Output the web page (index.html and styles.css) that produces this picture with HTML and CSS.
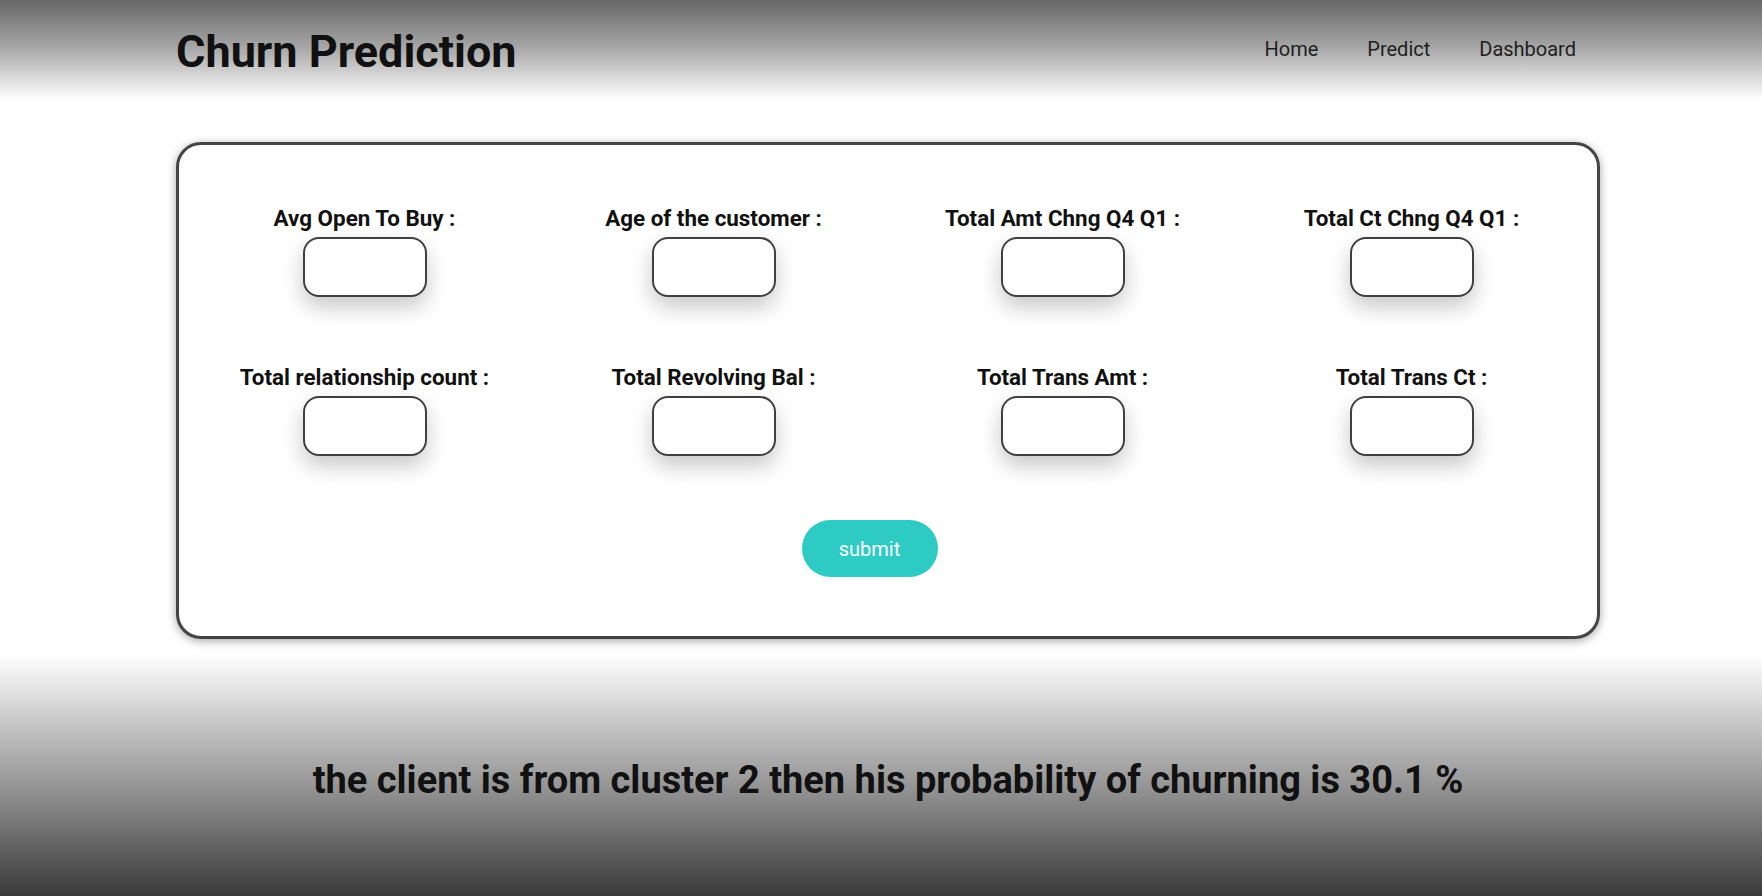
FILE: index.html
```html
<!DOCTYPE html>
<html lang="en">
<head>
<meta charset="utf-8">
<title>Churn Prediction</title>
<link rel="stylesheet" href="styles.css">
</head>
<body>
<header class="site-header">
  <div class="header-inner">
    <h1 class="brand">Churn Prediction</h1>
    <nav class="nav">
      <a class="nav-link" href="#">Home</a>
      <a class="nav-link" href="#">Predict</a>
      <a class="nav-link" href="#">Dashboard</a>
    </nav>
  </div>
</header>

<main class="main">
  <form class="card">
    <div class="grid">
      <div class="field"><label class="field-label">Avg Open To Buy :</label><input class="field-input" type="text"></div>
      <div class="field"><label class="field-label">Age of the customer :</label><input class="field-input" type="text"></div>
      <div class="field"><label class="field-label">Total Amt Chng Q4 Q1 :</label><input class="field-input" type="text"></div>
      <div class="field"><label class="field-label">Total Ct Chng Q4 Q1 :</label><input class="field-input" type="text"></div>
      <div class="field"><label class="field-label">Total relationship count :</label><input class="field-input" type="text"></div>
      <div class="field"><label class="field-label">Total Revolving Bal :</label><input class="field-input" type="text"></div>
      <div class="field"><label class="field-label">Total Trans Amt :</label><input class="field-input" type="text"></div>
      <div class="field"><label class="field-label">Total Trans Ct :</label><input class="field-input" type="text"></div>
    </div>
    <div class="actions">
      <button class="submit" type="button">submit</button>
    </div>
  </form>
</main>

<footer class="result">
  <p class="result-text">the client is from cluster 2 then his probability of churning is 30.1 %</p>
</footer>
</body>
</html>
```

FILE: styles.css
```css
* { box-sizing: border-box; }

html, body {
  margin: 0;
  padding: 0;
}

body {
  font-family: Roboto, "Liberation Sans", Arial, sans-serif;
  color: #111;
  background: #fff;
  width: 1762px;
  height: 896px;
  overflow: hidden;
}

.site-header {
  height: 100px;
  background: linear-gradient(to bottom, #676767 0%, #a3a3a3 45%, #ffffff 100%);
}

.header-inner {
  width: 1424px;
  margin-left: 176px;
  height: 100%;
  display: flex;
  align-items: center;
  justify-content: space-between;
  padding-right: 24px;
}

.brand {
  margin: 0;
  padding-top: 2px;
  font-size: 45px;
  font-weight: 700;
  color: #111;
  line-height: normal;
}

.nav {
  display: flex;
  gap: 49px;
  padding-bottom: 2px;
}

.nav-link {
  font-size: 20px;
  color: #1e1e1e;
  text-decoration: none;
  line-height: normal;
}

.main {
  padding-top: 42px;
}

.card {
  width: 1424px;
  margin-left: 176px;
  height: 497px;
  border: 3px solid #444;
  border-radius: 25px;
  background: #fff;
  box-shadow: 0 2px 10px rgba(0, 0, 0, 0.35);
  padding: 60px 11px 0;
  display: flex;
  flex-direction: column;
}

.grid {
  display: grid;
  grid-template-columns: repeat(4, 1fr);
  row-gap: 67px;
}

.field {
  display: flex;
  flex-direction: column;
  align-items: center;
  gap: 5px;
}

.field-label {
  font-size: 22.4px;
  font-weight: 700;
  line-height: 27px;
  color: #111;
}

.field-input {
  width: 124px;
  height: 60px;
  border: 2px solid #404040;
  border-radius: 16px;
  background: #fff;
  box-shadow: 0 10px 22px rgba(0, 0, 0, 0.22);
  outline: none;
}

.actions {
  display: flex;
  justify-content: center;
  padding-top: 64px;
  padding-right: 37px;
}

.submit {
  width: 136px;
  height: 57px;
  border: none;
  border-radius: 29px;
  background: #2ecbc4;
  color: #fff;
  font-family: Roboto, "Liberation Sans", Arial, sans-serif;
  font-size: 20px;
  font-weight: 400;
  cursor: pointer;
}

.result {
  margin-top: 16px;
  height: 241px;
  background: linear-gradient(to bottom, #ffffff 0%, #c4c4c4 30%, #8a8a8a 60%, #3a3a3a 100%);
  padding-top: 103px;
}

.result-text {
  margin: 0;
  width: 1424px;
  margin-left: 176px;
  text-align: center;
  font-size: 38px;
  font-weight: 700;
  color: #111;
  line-height: normal;
}
```
